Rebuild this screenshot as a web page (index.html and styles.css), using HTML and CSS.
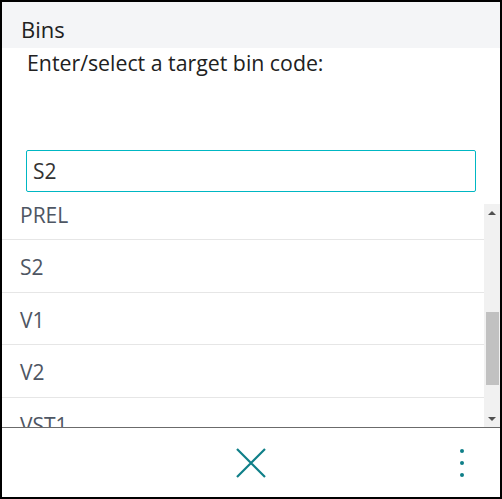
FILE: index.html
```html
<!DOCTYPE html>
<html>
<head>
<meta charset="utf-8">
<link rel="stylesheet" href="styles.css">
</head>
<body>
<div class="dialog">
  <div class="header">Bins</div>
  <div class="prompt">Enter/select a target bin code:</div>
  <div class="field"><input class="input" type="text" value="S2"></div>
  <div class="listwrap">
    <div class="list">
      <div class="rows">
        <div class="row">PREL</div>
        <div class="row">S2</div>
        <div class="row">V1</div>
        <div class="row">V2</div>
        <div class="row">VST1</div>
      </div>
    </div>
    <div class="scrollbar">
      <div class="arrow up"></div>
      <div class="track"><div class="thumb"></div></div>
      <div class="arrow down"></div>
    </div>
  </div>
  <div class="footer">
    <div class="spacer"></div>
    <svg class="close" width="30" height="30" viewBox="0 0 30 30"><path d="M1 1 L29 29 M29 1 L1 29" stroke="#0f7f88" stroke-width="2.2" fill="none"/></svg>
    <div class="more"><span></span><span></span><span></span></div>
  </div>
</div>
</body>
</html>
```
FILE: styles.css
```css
html, body { margin: 0; padding: 0; background: #fff; }
body { font-family: "Open Sans", "Noto Sans", sans-serif; }
.dialog {
  width: 502px; height: 499px; box-sizing: border-box;
  border: 2px solid #000;
  display: flex; flex-direction: column;
  background: #fff;
}
.header {
  height: 46px; flex: none; box-sizing: border-box;
  background: #f4f5f7; color: #212121;
  font-size: 22px; line-height: 30px;
  padding: 12px 0 0 19px;
}
.prompt {
  height: 102px; flex: none; box-sizing: border-box;
  color: #212121; font-size: 21.3px; line-height: 26px;
  padding: 2px 0 0 25px;
}
.field { height: 42px; flex: none; padding: 0 24px 0 24px; margin-bottom: 12px; }
.input {
  width: 100%; height: 42px; box-sizing: border-box;
  border: 1px solid #00b7c3; border-radius: 2px; outline: none;
  font-family: inherit; font-size: 21px; color: #333;
  padding: 0 0 0 6px; margin: 0;
}
.listwrap {
  height: 223px; flex: none; display: flex;
  border-bottom: 1px solid #6b6b6b;
}
.list { flex: 1; overflow: hidden; }
.rows { margin-top: -16px; }
.row {
  height: 52.4px; box-sizing: border-box;
  border-bottom: 1px solid #e6e6e6;
  color: #4e5663; font-size: 21px;
  padding: 14px 0 0 18px; line-height: 26px;
}
.scrollbar {
  width: 16px; flex: none; background: #f1f1f1;
  display: flex; flex-direction: column;
}
.arrow { height: 17px; flex: none; display: flex; align-items: center; justify-content: center; }
.arrow.up::before {
  content: ""; border-left: 4px solid transparent; border-right: 4px solid transparent;
  border-bottom: 4px solid #505050;
}
.arrow.down::before {
  content: ""; border-left: 4px solid transparent; border-right: 4px solid transparent;
  border-top: 4px solid #505050;
}
.track { flex: 1; padding: 91px 1px 0 2px; }
.thumb { height: 73px; background: #c1c1c1; }
.footer {
  flex: 1; display: grid; grid-template-columns: 1fr 30px 1fr; align-items: center;
}
.close { display: block; }
.more {
  display: flex; flex-direction: column; align-items: flex-end;
  gap: 8px; padding-right: 36px;
}
.more span { width: 4px; height: 4px; border-radius: 50%; background: #0f7f88; }
```
